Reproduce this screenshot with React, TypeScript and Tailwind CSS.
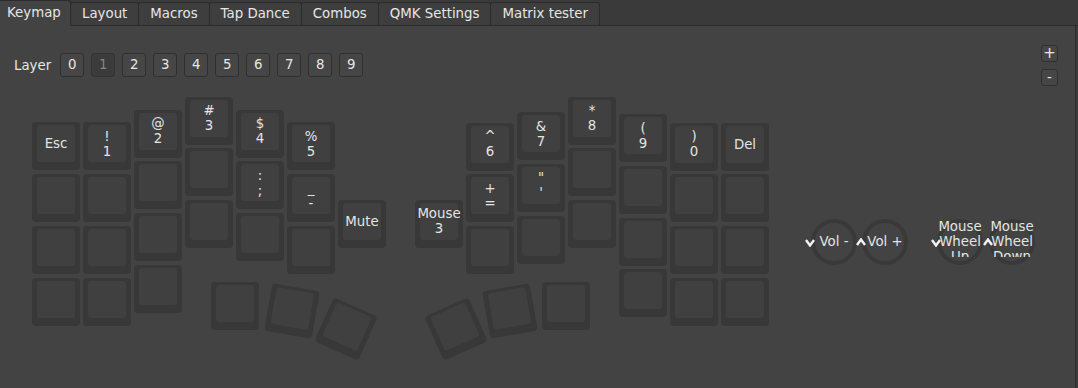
import React from 'react';

type KeyDef = { x: number; y: number; label?: string; rot?: number };

// keyboard canvas starts at page y=90
const TOP = 90;
const UY = 51.75;

const column = (x: number, y0: number, labels: string[]): KeyDef[] =>
  labels.map((label, i) => ({ x, y: y0 + i * UY, label }));

// thumb keys are given by their centre, then rotated
const thumb = (cx: number, cy: number, rot: number): KeyDef => ({ x: cx - 24, y: cy - 24, rot });

const keys: KeyDef[] = [
  ...column(32, 122.3, ['Esc', '', '', '']),
  ...column(83, 122.3, ['!\n1', '', '', '']),
  ...column(134, 109.5, ['@\n2', '', '', '']),
  ...column(185, 96.7, ['#\n3', '', '']),
  ...column(236, 109.5, ['$\n4', ':\n;', '']),
  ...column(287, 122.3, ['%\n5', '_\n-', '']),
  { x: 338, y: 199.5, label: 'Mute' },
  { x: 211, y: 282 },
  thumb(292, 310.5, 10),
  thumb(345.5, 329, 24),

  { x: 415, y: 199.5, label: 'Mouse\n3' },
  ...column(466, 122.7, ['^\n6', '+\n=', '']),
  ...column(517, 112, ['&\n7', '"\n\'', '']),
  ...column(568, 96.7, ['*\n8', '', '']),
  ...column(619, 114, ['(\n9', '', '', '']),
  ...column(670, 122.7, [')\n0', '', '', '']),
  ...column(721, 122.7, ['Del', '', '', '']),
  thumb(455.5, 329, -24),
  thumb(509.5, 310.5, -10),
  { x: 542, y: 282 },
];

const encoders = [
  { cx: 834, label: 'Vol -', dir: 'down' },
  { cx: 885, label: 'Vol +', dir: 'up' },
  { cx: 960, label: 'Mouse\nWheel\nUp', dir: 'down' },
  { cx: 1012, label: 'Mouse\nWheel\nDown', dir: 'up' },
];

const tabs = ['Layout', 'Macros', 'Tap Dance', 'Combos', 'QMK Settings', 'Matrix tester'];

const Key = ({ k }: { k: KeyDef }) => (
  <div
    className="absolute w-[48px] h-[48px] rounded-[4px] bg-[#383838]"
    style={{ left: k.x, top: k.y - TOP, transform: k.rot ? `rotate(${k.rot}deg)` : undefined }}
  >
    <div className="absolute left-[5px] top-[3px] w-[38px] h-[37px] rounded-[3px] bg-[#404040] flex flex-col items-center justify-center leading-[15px] text-[#e4e4e4] whitespace-nowrap">
      {(k.label ?? '').split('\n').filter(Boolean).map((line, i) => (
        <span key={i}>{line}</span>
      ))}
    </div>
  </div>
);

const Chevron = ({ dir }: { dir: string }) => (
  <svg width="10" height="9" viewBox="0 0 10 9" className="block">
    <polyline
      points={dir === 'down' ? '1,2 5,7.5 9,2' : '1,7 5,1.5 9,7'}
      fill="none"
      stroke="#f2f2f2"
      strokeWidth="2.4"
    />
  </svg>
);

const Encoder = ({ cx, label, dir }: { cx: number; label: string; dir: string }) => (
  <>
    <div
      className="absolute w-[46px] h-[46px] rounded-full border-[4px] border-[#393939]"
      style={{ left: cx - 23, top: 219 - TOP }}
    />
    <div className="absolute w-[50px] h-[40px] overflow-hidden" style={{ left: cx - 25, top: 217 - TOP }}>
      <div className="h-[48px] flex flex-col items-center justify-center leading-[15px] text-[#e4e4e4] whitespace-nowrap">
        {label.split('\n').map((line, i) => (
          <span key={i}>{line}</span>
        ))}
      </div>
    </div>
    <div className="absolute" style={{ left: cx - 29, top: 238 - TOP }}>
      <Chevron dir={dir} />
    </div>
  </>
);

const SmallButton = ({ children, active = false, className = '' }: { children: React.ReactNode; active?: boolean; className?: string }) => (
  <div
    className={`flex items-center justify-center rounded-[3px] border leading-none ${
      active ? 'bg-[#3b3b3b] border-[#333333] text-[#858585]' : 'bg-[#464646] border-[#2f2f2f] text-[#e6e6e6]'
    } ${className}`}
  >
    {children}
  </div>
);

export default function App() {
  return (
    <div className="w-[1078px] h-[388px] overflow-hidden flex flex-col bg-[#3a3a3a] font-['DejaVu_Sans',sans-serif] text-[13.33px] leading-[15px] text-[#e6e6e6]">
      {/* tab bar */}
      <div className="flex items-end h-[26px] shrink-0 border-b border-[#2b2b2b]">
        <div className="relative h-[26px] w-[71px] -mb-px pl-[7px] pt-[4px] bg-[#434343] border-r border-t border-[#2b2b2b] rounded-tr-[3px] z-10">
          Keymap
        </div>
        {tabs.map((t) => (
          <div
            key={t}
            className="h-[23px] px-[11px] pt-[3px] ml-[-1px] first:ml-[1px] bg-[#3e3e3e] border border-b-0 border-[#2b2b2b] rounded-t-[3px] whitespace-nowrap"
          >
            {t}
          </div>
        ))}
      </div>

      {/* keymap pane */}
      <div className="flex-1 flex flex-col bg-[#434343] mr-[2px] border-r border-[#2d2d2d]">
        <div className="flex justify-between pl-[14px] pr-[17px] pt-[19px]">
          <div className="flex items-center mt-[8px] h-[24px]">
            <span className="mr-[9px]">Layer</span>
            <div className="flex gap-[7px]">
              {['0', '1', '2', '3', '4', '5', '6', '7', '8', '9'].map((n) => (
                <SmallButton key={n} active={n === '1'} className="w-[24px] h-[24px]">
                  {n}
                </SmallButton>
              ))}
            </div>
          </div>
          <div className="flex flex-col gap-[7px]">
            <SmallButton className="w-[17px] h-[17px] text-[15px]">+</SmallButton>
            <SmallButton className="w-[17px] h-[17px]">-</SmallButton>
          </div>
        </div>

        <div className="relative mt-[4px] flex-1">
          {keys.map((k, i) => (
            <Key key={i} k={k} />
          ))}
          {encoders.map((e) => (
            <Encoder key={e.cx} {...e} />
          ))}
        </div>
      </div>
    </div>
  );
}
